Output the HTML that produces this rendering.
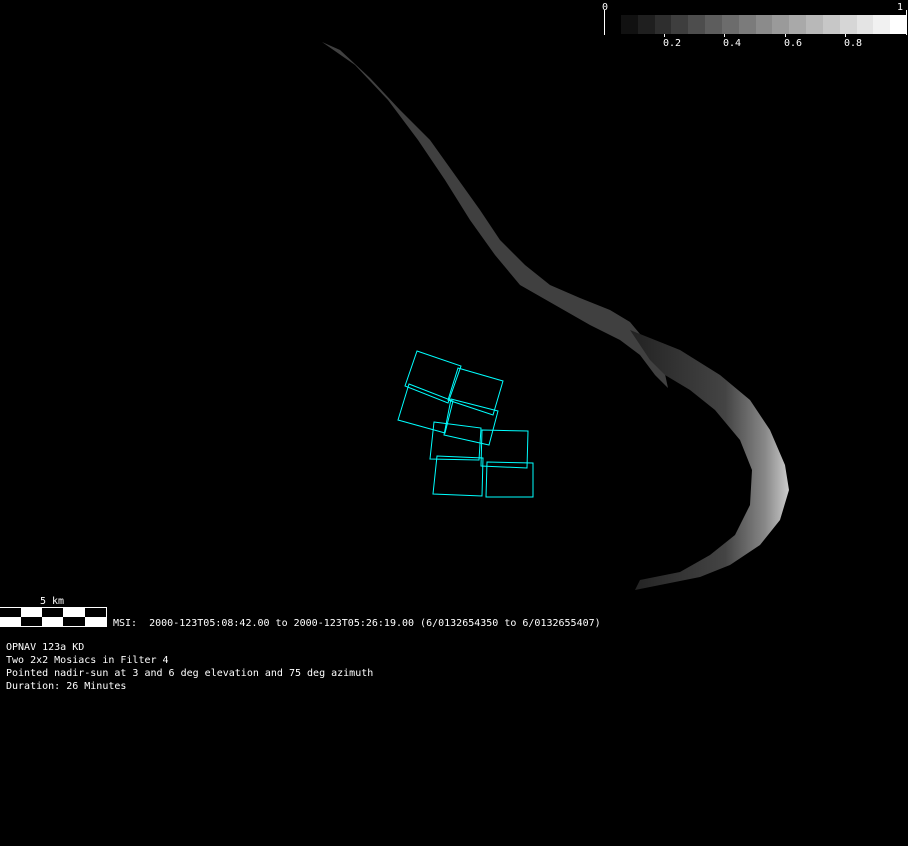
<!DOCTYPE html>
<html><head><style>
body{margin:0;background:#000;width:908px;height:846px;overflow:hidden;position:relative;font-family:"DejaVu Sans Mono","Liberation Mono",monospace;color:#fff}
.t{position:absolute;font-size:10px;white-space:pre;line-height:13px}
</style></head><body>
<svg width="908" height="846" style="position:absolute;left:0;top:0">
<defs>
<linearGradient id="g" x1="0" y1="0" x2="1" y2="0">
<stop offset="0" stop-color="#222"/><stop offset="0.6" stop-color="#444"/><stop offset="0.85" stop-color="#888"/><stop offset="1" stop-color="#ccc"/>
</linearGradient>
</defs>
<polygon fill="#404040" points="322,42 340,50 370,78 400,110 430,140 455,175 480,210 500,240 525,265 550,285 580,298 610,310 630,322 645,340 662,360 668,388 655,375 640,355 620,340 590,325 555,305 520,285 495,255 470,220 445,180 418,140 388,100 355,65"/>
<polygon fill="url(#g)" points="630,330 680,350 720,375 750,400 770,430 785,465 789,490 780,520 760,545 730,565 700,577 660,585 635,590 640,580 680,572 710,555 735,535 750,505 752,470 740,440 715,410 690,390 665,375 650,360"/>
<g fill="none" stroke="#00ffff" stroke-width="1">
<polygon points="417,351 461,366 448,403 405,386"/>
<polygon points="458,368 503,381 493,415 448,400"/>
<polygon points="409,384 453,401 445,433 398,420"/>
<polygon points="451,399 498,411 489,445 444,435"/>
<polygon points="434,422 481,428 479,460 430,459"/>
<polygon points="482,430 528,431 527,468 481,466"/>
<polygon points="437,456 483,458 482,496 433,494"/>
<polygon points="487,462 533,463 533,497 486,497"/>
</g>
<line x1="604.5" y1="10" x2="604.5" y2="35" stroke="#fff"/>
<line x1="906.5" y1="10" x2="906.5" y2="35" stroke="#fff"/>
<g stroke="#fff"><line x1="664.5" y1="34" x2="664.5" y2="37"/><line x1="724.5" y1="34" x2="724.5" y2="37"/><line x1="785.5" y1="34" x2="785.5" y2="37"/><line x1="845.5" y1="34" x2="845.5" y2="37"/></g>
<rect x="0.5" y="607.5" width="106" height="19" fill="#fff" stroke="#fff"/>
<g fill="#000"><rect x="0" y="608" width="21" height="9"/><rect x="42" y="608" width="21" height="9"/><rect x="85" y="608" width="21" height="9"/><rect x="21" y="617" width="21" height="9"/><rect x="63" y="617" width="22" height="9"/></g>
</svg>
<div style="position:absolute;left:621px;top:15px;height:19px;width:286px;display:flex">
<div style="flex:1;background:#111"></div><div style="flex:1;background:#1f1f1f"></div><div style="flex:1;background:#2e2e2e"></div><div style="flex:1;background:#3e3e3e"></div><div style="flex:1;background:#4d4d4d"></div><div style="flex:1;background:#5d5d5d"></div><div style="flex:1;background:#6c6c6c"></div><div style="flex:1;background:#7b7b7b"></div><div style="flex:1;background:#8b8b8b"></div><div style="flex:1;background:#9a9a9a"></div><div style="flex:1;background:#a9a9a9"></div><div style="flex:1;background:#b8b8b8"></div><div style="flex:1;background:#c7c7c7"></div><div style="flex:1;background:#d6d6d6"></div><div style="flex:1;background:#e4e4e4"></div><div style="flex:1;background:#f1f1f1"></div><div style="flex:1;background:#fff"></div>
</div>
<div class="t" style="left:602px;top:1px">0</div>
<div class="t" style="left:897px;top:1px">1</div>
<div class="t" style="left:663px;top:37px">0.2</div>
<div class="t" style="left:723px;top:37px">0.4</div>
<div class="t" style="left:784px;top:37px">0.6</div>
<div class="t" style="left:844px;top:37px">0.8</div>
<div class="t" style="left:40px;top:595px">5 km</div>
<div class="t" style="left:113px;top:617px">MSI:  2000-123T05:08:42.00 to 2000-123T05:26:19.00 (6/0132654350 to 6/0132655407)</div>
<div class="t" style="left:6px;top:641px">OPNAV 123a KD
Two 2x2 Mosiacs in Filter 4
Pointed nadir-sun at 3 and 6 deg elevation and 75 deg azimuth
Duration: 26 Minutes</div>
</body></html>
